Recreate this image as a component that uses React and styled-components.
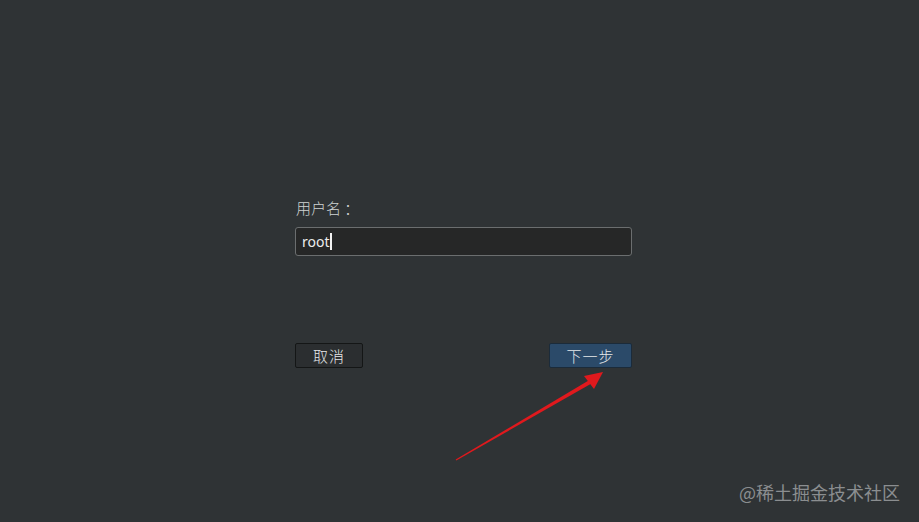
import React from 'react';
import styled, { createGlobalStyle } from 'styled-components';

const Global = createGlobalStyle`
  html, body { margin: 0; padding: 0; background: #2f3335; }
  body { font-family: "Noto Sans CJK SC", "Liberation Sans", sans-serif; }
`;

const Page = styled.div`
  position: relative;
  width: 919px;
  height: 522px;
  background: #2f3335;
  overflow: hidden;
`;

const Form = styled.div`
  display: flex;
  flex-direction: column;
  width: 337px;
  margin-left: 295px;
  padding-top: 197px;
`;

const Label = styled.div`
  color: #d0d3d3;
  font-size: 15px;
  font-weight: 300;
  line-height: 22px;
  margin-left: 1px;
  margin-bottom: 8px;
`;

const Field = styled.div`
  display: flex;
  align-items: center;
  height: 27px;
  background: #262727;
  border: 1px solid #6b6e6f;
  border-radius: 3px;
  padding: 0 6px;
  color: #eceded;
  font-family: "Noto Sans", "Liberation Sans", sans-serif;
  font-size: 14px;
`;

const Caret = styled.span`
  display: inline-block;
  width: 2px;
  height: 17px;
  background: #f2f2f2;
`;

const Buttons = styled.div`
  display: flex;
  justify-content: space-between;
  margin-top: 87px;
`;

const Button = styled.div`
  display: flex;
  align-items: center;
  justify-content: center;
  width: ${({ $w }) => $w}px;
  height: 23px;
  border-radius: 2px;
  border: 1px solid ${({ $primary }) => ($primary ? '#1b2b3a' : '#141616')};
  background: ${({ $primary }) => ($primary ? '#2b4a69' : '#2b2e30')};
  color: #e6e8e9;
  font-size: 15px;
  font-weight: 300;
  letter-spacing: 1px;
`;

const Arrow = styled.svg`
  position: absolute;
  left: 450px;
  top: 365px;
`;

const Watermark = styled.div`
  position: absolute;
  right: 19px;
  bottom: 17px;
  color: #8b8e90;
  font-size: 18px;
`;

export default function App() {
  return (
    <Page>
      <Global />
      <Form>
        <Label>用户名 ：</Label>
        <Field>
          root<Caret />
        </Field>
        <Buttons>
          <Button $w={66}>取消</Button>
          <Button $w={81} $primary>下一步</Button>
        </Buttons>
      </Form>
      <Arrow width="160" height="100" viewBox="0 0 160 100">
        <polygon points="5.7,94.5 6.3,95.5 141,18.7 139,15.3" fill="#e0191d" />
        <polygon points="153,7 134,11 144,24" fill="#e0191d" />
      </Arrow>
      <Watermark>@稀土掘金技术社区</Watermark>
    </Page>
  );
}
